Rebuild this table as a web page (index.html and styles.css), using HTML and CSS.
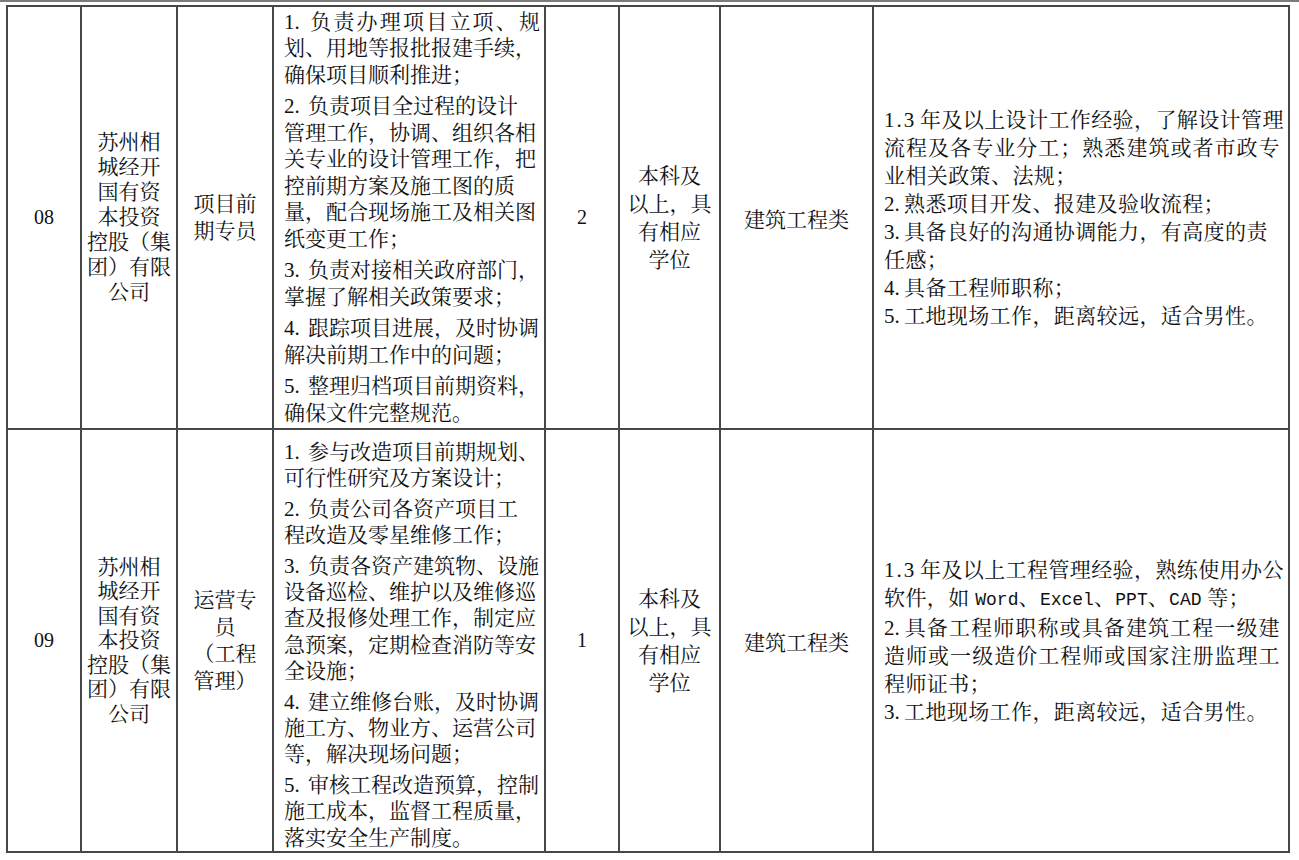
FILE: index.html
```html
<!DOCTYPE html>
<html lang="zh-CN">
<head>
<meta charset="utf-8">
<title>岗位表</title>
<link rel="stylesheet" href="styles.css">
</head>
<body>
<div class="topline"></div>
<div class="wrap">
<table class="jobs">
  <colgroup>
    <col class="c1"><col class="c2"><col class="c3"><col class="c4"><col class="c5"><col class="c6"><col class="c7"><col class="c8">
  </colgroup>
  <tr class="r1">
    <td class="num">08</td>
    <td class="org">苏州相<br>城经开<br>国有资<br>本投资<br>控股（集<br>团）有限<br>公司</td>
    <td class="pos">项目前<br>期专员</td>
    <td class="duty">
      <p><span class="j"><span class="n">1.</span>负责办理项目立项、规</span>划、用地等报批报建手续，<br>确保项目顺利推进；</p>
      <p><span class="n">2.</span>负责项目全过程的设计<br>管理工作，协调、组织各相<br>关专业的设计管理工作，把<br>控前期方案及施工图的质<br>量，配合现场施工及相关图<br>纸变更工作；</p>
      <p><span class="n">3.</span>负责对接相关政府部门，<br>掌握了解相关政策要求；</p>
      <p><span class="n">4.</span>跟踪项目进展，及时协调<br>解决前期工作中的问题；</p>
      <p><span class="n">5.</span>整理归档项目前期资料，<br>确保文件完整规范。</p>
    </td>
    <td class="count">2</td>
    <td class="edu">本科及<br>以上，具<br>有相应<br>学位</td>
    <td class="major">建筑工程类</td>
    <td class="req">
      <span class="j"><span class="m3">1.3</span>年及以上设计工作经验，了解设计管理</span>
      <span class="j">流程及各专业分工；熟悉建筑或者市政专</span>
      业相关政策、法规；<br>
      <span class="m">2.</span>熟悉项目开发、报建及验收流程；<br>
      <span class="m">3.</span>具备良好的沟通协调能力，有高度的责<br>
      任感；<br>
      <span class="m">4.</span>具备工程师职称；<br>
      <span class="m">5.</span>工地现场工作，距离较远，适合男性。
    </td>
  </tr>
  <tr class="r2">
    <td class="num">09</td>
    <td class="org org2">苏州相<br>城经开<br>国有资<br>本投资<br>控股（集<br>团）有限<br>公司</td>
    <td class="pos">运营专<br>员<br>（工程<br>管理）</td>
    <td class="duty duty2">
      <p><span class="n">1.</span>参与改造项目前期规划、<br>可行性研究及方案设计；</p>
      <p><span class="n">2.</span>负责公司各资产项目工<br>程改造及零星维修工作；</p>
      <p><span class="n">3.</span>负责各资产建筑物、设施<br>设备巡检、维护以及维修巡<br>查及报修处理工作，制定应<br>急预案，定期检查消防等安<br>全设施；</p>
      <p><span class="n">4.</span>建立维修台账，及时协调<br>施工方、物业方、运营公司<br>等，解决现场问题；</p>
      <p><span class="n">5.</span>审核工程改造预算，控制<br>施工成本，监督工程质量，<br>落实安全生产制度。</p>
    </td>
    <td class="count">1</td>
    <td class="edu">本科及<br>以上，具<br>有相应<br>学位</td>
    <td class="major">建筑工程类</td>
    <td class="req">
      <span class="j"><span class="m3">1.3</span>年及以上工程管理经验，熟练使用办公</span>
      软件，如&nbsp;<span class="mono">Word</span>、<span class="mono">Excel</span>、<span class="mono">PPT</span>、<span class="mono">CAD</span>&nbsp;等；<br>
      <span class="j"><span class="m">2.</span>具备工程师职称或具备建筑工程一级建</span>
      <span class="j">造师或一级造价工程师或国家注册监理工</span>
      程师证书；<br>
      <span class="m">3.</span>工地现场工作，距离较远，适合男性。
    </td>
  </tr>
</table>
</div>
</body>
</html>
```

FILE: styles.css
```css
html, body {
  margin: 0;
  padding: 0;
  background: #ffffff;
}
body {
  font-family: "Liberation Serif", "Times New Roman", "DejaVu Serif", "Noto Serif CJK SC", "Noto Sans CJK SC", serif;
  color: #111;
  font-size: 21px;
}
.topline {
  height: 2px;
  background: #7a7a7a;
}
.wrap {
  padding: 3px 0 0 6px;
}
.jobs {
  border-collapse: collapse;
  table-layout: fixed;
  width: 1282px;
  font-family: inherit;
  font-size: inherit;
}
.c1 { width: 74px; }
.c2 { width: 96px; }
.c3 { width: 96px; }
.c4 { width: 272px; }
.c5 { width: 74px; }
.c6 { width: 101px; }
.c7 { width: 153px; }
.c8 { width: 416px; }
.jobs td {
  border: 2px solid #474747;
  padding: 0;
  vertical-align: middle;
  text-align: center;
  white-space: nowrap;
}
.r1 { height: 423px; }
.r2 { height: 422px; }
.num, .count { font-size: 20px; }
.org { line-height: 25px; }
.org2 { line-height: 24.5px; }
.pos { line-height: 27px; }
.edu { line-height: 28px; }
.duty {
  text-align: left !important;
  padding: 0 4px 0 10px !important;
  line-height: 26.5px;
}
.duty p {
  margin: 0 0 5px 0;
}
.duty p:last-child { margin-bottom: 0; }
.jobs td.duty2 {
  line-height: 26.4px;
  padding-top: 9px !important;
}
.duty2 p {
  margin-bottom: 4px;
}
.n {
  display: inline-block;
  width: 24px;
}
.j {
  display: block;
  text-align: justify;
  text-align-last: justify;
}
.req {
  text-align: left !important;
  padding: 0 8px 0 10px !important;
  line-height: 28px;
  letter-spacing: 0.4px;
}
.m {
  display: inline-block;
  width: 20px;
  letter-spacing: 0;
}
.m3 {
  display: inline-block;
  width: 36px;
  letter-spacing: 2px;
}
.mono {
  font-family: "Liberation Mono", "Courier New", "DejaVu Sans Mono", monospace;
  font-size: 18px;
  letter-spacing: 0;
}
```
